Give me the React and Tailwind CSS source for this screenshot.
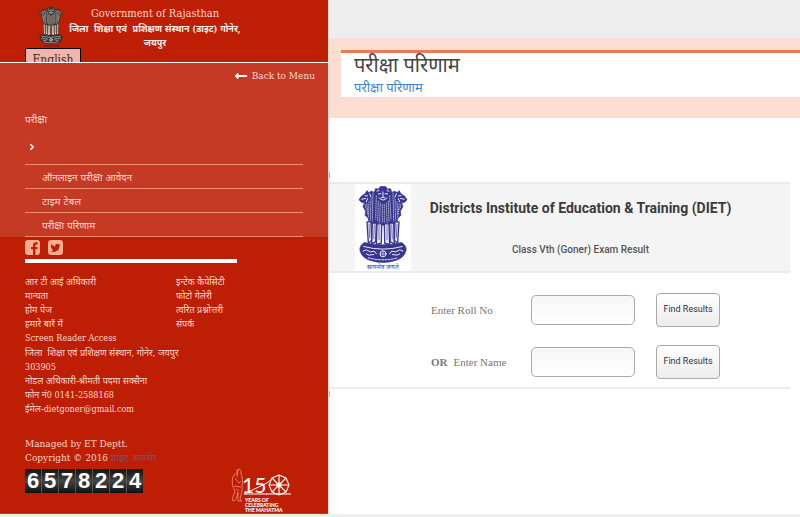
import { FaLongArrowAltLeft, FaAngleRight } from "react-icons/fa";

const examLinks = ["ऑनलाइन परीक्षा आवेदन", "टाइम टेबल", "परीक्षा परिणाम"];

const footerLinks = [
  ["आर टी आई अधिकारी", "मान्यता", "होम पेज", "हमारे बारें में", "Screen Reader Access"],
  ["इन्टेक कैपेसिटी", "फोटो गेलेरी", "त्वरित प्रश्नोत्तरी", "संपर्क"],
];

const address = [
  "जिला  शिक्षा एवं प्रशिक्षण संस्थान, गोनेर, जयपुर",
  "303905",
  "नोडल अधिकारी-श्रीमती पदमा सक्सैना",
  "फोन नं0 0141-2588168",
  "ईमेल-dietgoner@gmail.com",
];

const visitors = "6578224";

const searches = [
  { id: "roll", label: "Enter Roll No" },
  { id: "name", prefix: "OR", label: "Enter Name" },
];

const Emblem = ({ className, ink, paper }) => (
  <svg viewBox="0 0 168 258" className={className} aria-hidden="true">
    <g fill={ink} stroke={ink} strokeWidth="2" strokeLinejoin="round">
      {/* side lions */}
      <path d="M62 26 L50 20 L40 24 L36 18 L30 28 L18 36 L12 46 L20 54 L28 54 L24 66 L32 80 L30 92 L40 102 L42 116 L66 120 L66 30 Z" />
      <path d="M106 26 L118 20 L128 24 L132 18 L138 28 L150 36 L156 46 L148 54 L140 54 L144 66 L136 80 L138 92 L128 102 L126 116 L102 120 L102 30 Z" />
      {/* front lion */}
      <path d="M58 22 L62 12 L70 14 L76 6 L92 6 L98 14 L106 12 L110 22 L108 50 L114 84 L104 122 L64 122 L54 84 L60 50 Z" />
      {/* abacus */}
      <path d="M28 174 Q10 186 16 202 Q22 220 46 228 Q84 240 122 228 Q146 220 152 202 Q158 186 140 174 Q84 188 28 174 Z" />
    </g>
    {/* legs */}
    <g fill={paper} stroke={ink} strokeWidth="4" strokeLinejoin="round">
      <path d="M36 112 L48 112 L50 168 L40 176 Z" />
      <path d="M52 116 L64 116 L62 172 L50 178 Z" />
      <path d="M66 118 L80 118 L79 176 L64 180 Z" />
      <path d="M88 118 L102 118 L104 180 L89 176 Z" />
      <path d="M104 116 L116 116 L118 178 L106 172 Z" />
      <path d="M120 112 L132 112 L128 176 L118 168 Z" />
      <path d="M42 118 L44 160 M58 120 L56 164 M72 122 V166 M96 122 V166 M110 120 L112 164 M126 118 L124 160" strokeWidth="2" />
    </g>
    <g fill="none" stroke={paper} strokeWidth="3" strokeLinecap="round">
      {/* faces */}
      <path d="M66 20 L72 18 M102 20 L96 18 M70 28 H78 M90 28 H98 M84 22 V36 M78 40 Q84 36 90 40 M72 40 Q84 54 96 40" />
      <path d="M20 44 L32 42 M30 34 L38 34 M38 42 L34 52 M44 28 L48 38" />
      <path d="M148 44 L136 42 M138 34 L130 34 M130 42 L134 52 M124 28 L120 38" />
      {/* manes */}
      <g strokeWidth="2" strokeDasharray="3 4">
        <path d="M64 34 L62 104 M70 50 L68 112 M76 56 L74 114 M82 60 V114 M88 60 V114 M94 56 L96 114 M100 50 L102 112 M104 34 L108 104" />
        <path d="M54 26 L52 110 M48 44 L46 108 M42 52 L40 98 M36 58 L38 90 M30 60 L34 74" />
        <path d="M114 26 L116 110 M120 44 L122 108 M126 52 L128 98 M132 58 L130 90 M138 60 L134 74" />
      </g>
      {/* wheel and animals on the base */}
      <path d="M26 186 Q84 202 142 186" />
      <path d="M24 200 L34 196 L46 202 L58 200 L64 208 M34 208 L42 212 L56 210 M104 208 L110 200 L122 202 L134 196 L144 200 M112 210 L126 212 L134 208" />
      <path d="M40 220 Q84 232 128 220" strokeDasharray="6 4" />
      <circle cx="84" cy="208" r="9" />
      <path d="M75 208 H93 M84 199 V217" strokeWidth="2" />
    </g>
    <text x="84" y="253" textAnchor="middle" fontSize="19" fontWeight="500" fill={ink}>
      सत्यमेव जयते
    </text>
  </svg>
);

const MahatmaLogo = () => (
  <svg viewBox="0 0 60 46" className="h-[46px] w-[60px]" fill="none" stroke="#fbd3c8" role="img" aria-label="150 years of celebrating the Mahatma">
    {/* walking figure */}
    <g strokeWidth="0.7" strokeLinejoin="round" stroke="#f0a594">
      <path d="M6 6 Q5 2 8 2 Q11 3 10 7 L11 10 Q12 15 11 20 L11 24 L9 32 L11 34 L7 34 L7 25 L5 32 L3 34 L1 33 L4 24 L2 20 Q0 12 3 8 Z" />
      <path d="M4 11 L8 16 L10 14 M3 19 L10 20 M7 3 L6 10 M5 22 L8 24" />
    </g>
    <path d="M13 27 L36 16 L42 11 M13 27 H36" strokeWidth="1" stroke="#fff" />
    <text x="11" y="26" fontSize="21" fontFamily="Lato, sans-serif" fill="#fff" stroke="none">
      15
    </text>
    {/* spinning wheel */}
    <g stroke="#fff" strokeWidth="1.1">
      <path d="M48 8 L55 11 L58 18 L55 25 L48 28 L41 25 L38 18 L41 11 Z" />
      <circle cx="48" cy="18" r="2" />
      <path d="M48 8 V28 M38 18 H58 M41 11 L55 25 M55 11 L41 25" />
      <path d="M35 27 H60" strokeWidth="1" />
    </g>
    <g fill="#fff" stroke="none" fontSize="5" fontWeight="900" fontFamily="Lato, sans-serif">
      <text x="14" y="35">YEARS OF</text>
      <text x="14" y="40">CELEBRATING</text>
      <text x="14" y="45">THE MAHATMA</text>
    </g>
  </svg>
);

const SocialIcon = ({ label, d }) => (
  <a href="#" aria-label={label}>
    <svg viewBox="128 128 1536 1536" className="size-[15px]" fill="#fbad92">
      <path d={d} />
    </svg>
  </a>
);

const Sidebar = () => (
  <aside className="flex w-[41%] shrink-0 flex-col border-b border-[#c63924] bg-[#be1e04] text-[10px] leading-3.5 text-[#fbd9cf] [font-family:'DejaVu_Serif_Condensed','DejaVu_Serif','Noto_Sans',serif]">
    <header className="flex h-[63px] overflow-hidden border-b border-white pl-[25px]">
      <div className="w-12 shrink-0 pt-1.5">
        <Emblem className="ml-3 h-[42px] w-7" ink="#33302c" paper="#f4f1ea" />
        <button className="h-6 w-14 border border-black bg-[#f2b5ac] text-[12px] leading-4 text-[#3a2a28]">English</button>
      </div>
      <div className="w-[164px] pt-1.5 text-center">
        <p className="text-[11px] leading-4">Government of Rajasthan</p>
        <h1 className="-mx-2 text-[9px] leading-3.5 font-bold whitespace-nowrap text-[#fff0ea]">
          जिला&nbsp; शिक्षा एवं&nbsp; प्रशिक्षण संस्थान (डाइट) गोनेर,
          <br />
          जयपुर
        </h1>
      </div>
    </header>

    <nav className="bg-[#c63924] px-[25px]">
      <a href="#" className="-mr-3 flex items-center justify-end gap-1 pt-1.5">
        <FaLongArrowAltLeft className="size-3.5 text-white" />
        Back to Menu
      </a>
      <a href="#" className="mt-[26px] block pt-1">परीक्षा</a>
      <button className="mt-2 block h-6 pl-0.5" aria-label="Expand">
        <FaAngleRight className="size-2.5 text-white" />
      </button>
      <ul className="mt-[5px] border-t border-[#f08d74]">
        {examLinks.map((item) => (
          <li key={item} className="border-b border-[#f08d74] pt-1.5 pb-[3px] pl-[17px]">
            <a href="#" className="block">{item}</a>
          </li>
        ))}
      </ul>
    </nav>

    <div className="px-[25px] pt-[3px]">
      <div className="flex gap-2">
        <SocialIcon
          label="Facebook"
          d="M1376 128q119 0 203.5 84.5t84.5 203.5v960q0 119-84.5 203.5t-203.5 84.5h-188v-595h199l30-232h-229v-148q0-56 23.5-84t91.5-28l122-1v-207q-63-9-178-9-136 0-217.5 80t-81.5 226v171h-200v232h200v595h-532q-119 0-203.5-84.5t-84.5-203.5v-960q0-119 84.5-203.5t203.5-84.5h960z"
        />
        <SocialIcon
          label="Twitter"
          d="M1408 610q-56 25-121 34 68-40 93-117-65 38-134 51-61-66-153-66-87 0-148.5 61.5t-61.5 148.5q0 29 5 48-129-7-242-65t-192-155q-29 50-29 106 0 114 91 175-47-1-100-26v2q0 75 50 133.5t123 72.5q-29 8-51 8-13 0-39-4 21 63 74.5 104t121.5 42q-116 90-261 90-26 0-50-3 148 94 322 94 112 0 210-35.5t168-95 120.5-137 75-162 24.5-168.5q0-18-1-27 63-45 105-109zm256-194v960q0 119-84.5 203.5t-203.5 84.5h-960q-119 0-203.5-84.5t-84.5-203.5v-960q0-119 84.5-203.5t203.5-84.5h960q119 0 203.5 84.5t84.5 203.5z"
        />
      </div>
      <hr className="mt-1 w-[212px] border-t-4 border-white" />

      <div className="text-[9px] leading-3.5">
        <div className="mt-3 flex">
          {footerLinks.map((column, i) => (
            <ul key={i} className="w-[151px] shrink-0">
              {column.map((item) => (
                <li key={item}>
                  <a href="#" className="block">{item}</a>
                </li>
              ))}
            </ul>
          ))}
        </div>
        <address className="pt-px not-italic">
          {address.map((line) => (
            <p key={line} className="whitespace-pre">{line}</p>
          ))}
        </address>
      </div>

      <div className="mt-[21px] flex items-end justify-between pr-3">
        <div>
          <p>Managed by ET Deptt.</p>
          <p>
            Copyright © 2016 <a href="#" className="text-[#73517a]">डाइट अजमेर</a>
          </p>
          <div className="mt-1 mb-5 flex w-fit gap-px bg-[#555] [font-family:'Liberation_Sans',sans-serif]">
            {visitors.split("").map((digit, i) => (
              <span
                key={i}
                className="flex h-6 w-4 items-center justify-center bg-linear-to-b from-[#111] via-[#444] to-[#111] text-[22px] font-bold text-white"
              >
                {digit}
              </span>
            ))}
          </div>
        </div>
        <MahatmaLogo />
      </div>
    </div>
  </aside>
);

const ResultForm = () => (
  <section className="pt-[54px] pr-2.5 [font-family:Roboto,'Liberation_Sans',sans-serif]">
    <div className="mb-1 h-1.5 w-px bg-[#c9a9a0]" />
    <header className="flex border-y-2 border-[#ebebeb] bg-[#f4f4f4] pl-[26px]">
      <div className="shrink-0 bg-white">
        <Emblem className="h-[87px] w-14" ink="#38368f" paper="#e9e8f5" />
      </div>
      <div className="flex-1 pt-3 pr-10 text-center text-[#3b3b3b]">
        <h2 className="text-[14px] leading-6 font-bold">Districts Institute of Education &amp; Training (DIET)</h2>
        <p className="mt-[22px] text-[10px] leading-4 font-medium text-[#555]">Class Vth (Goner) Exam Result</p>
      </div>
    </header>
    <form className="flex flex-col gap-[18px] border-b-2 border-[#ebebeb] pt-5 pb-2 pl-[102px]" onSubmit={(e) => e.preventDefault()}>
      {searches.map(({ id, prefix, label }) => (
        <div key={id} className="flex items-center">
          <label htmlFor={id} className="w-[100px] text-[11px] text-[#777] [font-family:'Liberation_Serif',serif]">
            {prefix && <b className="mr-1.5">{prefix}</b>}
            {label}
          </label>
          <input
            id={id}
            type="text"
            className="h-[30px] w-[104px] rounded-[5px] border border-[#aaa] bg-linear-to-b from-[#f6f6f6] to-white px-2 text-[11px]"
          />
          <button className="ml-[21px] h-[34px] w-16 rounded-[4px] border border-[#aaa] bg-linear-to-b from-white to-[#eeecec] text-[9px] whitespace-nowrap text-[#333]">
            Find Results
          </button>
        </div>
      ))}
    </form>
    <div className="mt-0.5 h-1.5 w-px bg-[#c9a9a0]" />
  </section>
);

const App = () => (
  <div className="flex min-h-screen flex-col border-b-3 border-[#eeeeee] bg-white [font-family:'Noto_Sans',sans-serif]">
    <div className="flex flex-1">
      <Sidebar />
      <main className="min-w-0 flex-1 border-l border-[#fcddd2]">
        <div className="h-[38px] bg-[#eeeeee]" />
        <div className="bg-[#fcddd2] pt-3 pb-[21px] pl-3">
          <div className="border-t-3 border-[#ea7a56] bg-white pl-[13px]">
            <h1 className="text-[20px] leading-6 text-[#444]">परीक्षा परिणाम</h1>
            <a href="#" className="block text-[13px] leading-5 text-[#4285c8]">परीक्षा परिणाम</a>
          </div>
        </div>
        <ResultForm />
      </main>
    </div>
  </div>
);

export default App;
